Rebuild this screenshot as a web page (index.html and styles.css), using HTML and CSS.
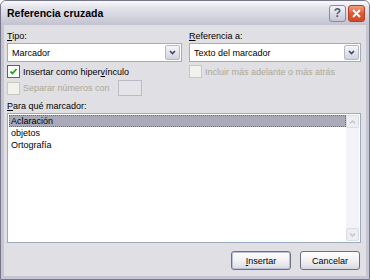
FILE: index.html
```html
<!DOCTYPE html>
<html lang="es">
<head>
    <meta charset="UTF-8">
    <title>Referencia cruzada</title>
    <link rel="stylesheet" href="styles.css">
</head>
<body>
    <div class="window">
        <div class="titlebar">
            <span class="title">Referencia cruzada</span>
            <div class="caption-buttons">
                <span class="cap-btn help">?</span>
                <span class="cap-btn close">
                    <svg width="9" height="9" viewBox="0 0 9 9"><path d="M1 1 L8 8 M8 1 L1 8" stroke="#fff" stroke-width="1.8" fill="none"/></svg>
                </span>
            </div>
        </div>

        <div class="client">
            <div class="columns">
                <div class="col">
                    <div class="lbl"><u>T</u>ipo:</div>
                    <div class="combo">
                        <span class="combo-text">Marcador</span>
                        <span class="combo-btn">
                            <svg width="7" height="5" viewBox="0 0 7 5"><path d="M1 1 L3.5 3.5 L6 1" stroke="#3c4a64" stroke-width="1.6" fill="none"/></svg>
                        </span>
                    </div>
                    <div class="check-row">
                        <span class="checkbox">
                            <svg width="9" height="9" viewBox="0 0 9 9"><path d="M1.5 4.5 L3.5 6.5 L7.5 2" stroke="#21a121" stroke-width="1.8" fill="none"/></svg>
                        </span>
                        <span>Insertar como hiper<u>v</u>ínculo</span>
                    </div>
                    <div class="check-row disabled sep-row">
                        <span class="checkbox"></span>
                        <span>Separar números con</span>
                        <span class="small-input"></span>
                    </div>
                </div>
                <div class="col">
                    <div class="lbl"><u>R</u>eferencia a:</div>
                    <div class="combo">
                        <span class="combo-text">Texto del marcador</span>
                        <span class="combo-btn">
                            <svg width="7" height="5" viewBox="0 0 7 5"><path d="M1 1 L3.5 3.5 L6 1" stroke="#3c4a64" stroke-width="1.6" fill="none"/></svg>
                        </span>
                    </div>
                    <div class="check-row disabled">
                        <span class="checkbox"></span>
                        <span>Incluir más adelante o más atrás</span>
                    </div>
                </div>
            </div>

            <div class="lbl list-lbl"><u>P</u>ara qué marcador:</div>
            <div class="listbox">
                <div class="items">
                    <div class="item selected">Aclaración</div>
                    <div class="item">objetos</div>
                    <div class="item">Ortografía</div>
                </div>
                <div class="scrollbar">
                    <span class="sb-btn">
                        <svg width="7" height="4" viewBox="0 0 7 4"><path d="M1 3.5 L3.5 1 L6 3.5" stroke="#c4c4cc" stroke-width="1.4" fill="none"/></svg>
                    </span>
                    <span class="sb-track"></span>
                    <span class="sb-btn">
                        <svg width="7" height="4" viewBox="0 0 7 4"><path d="M1 0.5 L3.5 3 L6 0.5" stroke="#c4c4cc" stroke-width="1.4" fill="none"/></svg>
                    </span>
                </div>
            </div>

            <div class="buttons">
                <button class="push default"><u>I</u>nsertar</button>
                <button class="push">Cancelar</button>
            </div>
        </div>
    </div>
</body>
</html>
```

FILE: styles.css
```css
body {
    margin: 0;
    font-family: "Liberation Sans", Arial, sans-serif;
    font-size: 9px;
    color: #000;
    background: #fff;
}

.window {
    width: 370px;
    height: 280px;
    box-sizing: border-box;
    display: flex;
    flex-direction: column;
    background: #c6c6d2;
    border: 1px solid #76768a;
    border-radius: 6px 6px 0 0;
}

.titlebar {
    height: 24px;
    display: flex;
    align-items: center;
    padding: 0 4px 0 6px;
    border-radius: 5px 5px 0 0;
    background: linear-gradient(#fbfbfd 0%, #e4e4ec 25%, #d6d6e0 60%, #c2c2d0 100%);
}

.title {
    flex: 1;
    font-weight: bold;
    font-size: 10.5px;
    color: #000;
}

.caption-buttons {
    display: flex;
    gap: 2px;
}

.cap-btn {
    width: 17px;
    height: 17px;
    box-sizing: border-box;
    border-radius: 3px;
    display: flex;
    align-items: center;
    justify-content: center;
}

.help {
    border: 1px solid #8a8aa0;
    background: linear-gradient(#f4f4f8, #c4c6d8);
    color: #5a5a70;
    font-weight: bold;
    font-size: 12px;
}

.close {
    border: 1px solid #b04020;
    background: linear-gradient(#f0a080, #e05a34 50%, #d04a24);
}

.client {
    flex: 1;
    margin: 0 3px 3px;
    padding: 5px 5px 0 3px;
    background: #e0dfe3;
    display: flex;
    flex-direction: column;
}

.columns {
    display: grid;
    grid-template-columns: 175px 1fr;
    column-gap: 7px;
}

.lbl {
    line-height: 12px;
    height: 12px;
    margin-bottom: 1px;
}

.combo {
    height: 19px;
    box-sizing: border-box;
    border: 1px solid #a5acb8;
    background: #fff;
    display: flex;
    align-items: center;
    padding: 1px;
}

.combo-text {
    flex: 1;
    padding-left: 3px;
}

.combo-btn {
    width: 15px;
    height: 15px;
    box-sizing: border-box;
    border: 1px solid #b4b8c8;
    border-radius: 2px;
    background: linear-gradient(#f6f6fa, #d0d2de);
    display: flex;
    align-items: center;
    justify-content: center;
}

.check-row {
    display: flex;
    align-items: center;
    gap: 3px;
    height: 13px;
    margin-top: 3px;
}

.checkbox {
    width: 13px;
    height: 13px;
    box-sizing: border-box;
    border: 1px solid #3d6a98;
    background: #fff;
    display: flex;
    align-items: center;
    justify-content: center;
}

.disabled {
    color: #aca899;
}

.disabled .checkbox {
    border-color: #cac8bc;
    background: #f2f1ee;
}

.sep-row {
    height: 16px;
    margin-top: 2px;
}

.small-input {
    width: 24px;
    height: 16px;
    box-sizing: border-box;
    margin-left: 5px;
    border: 1px solid #bcbcc8;
    background: #e4e4e8;
}

.list-lbl {
    margin-top: 4px;
}

.listbox {
    height: 130px;
    box-sizing: border-box;
    border: 1px solid #9aaac0;
    background: #fff;
    display: flex;
    padding: 1px;
}

.items {
    flex: 1;
}

.item {
    height: 12px;
    line-height: 12px;
    padding-left: 2px;
}

.item.selected {
    background: #a9a9b8;
    outline: 1px dotted #6a6a78;
    outline-offset: -1px;
}

.scrollbar {
    width: 13px;
    display: flex;
    flex-direction: column;
    background: #f4f4f8;
}

.sb-btn {
    height: 13px;
    box-sizing: border-box;
    border: 1px solid #dcdce4;
    border-radius: 2px;
    background: #eeeef2;
    display: flex;
    align-items: center;
    justify-content: center;
}

.sb-track {
    flex: 1;
}

.buttons {
    display: flex;
    justify-content: flex-end;
    gap: 9px;
    margin-top: 8px;
    margin-right: 1px;
}

.push {
    width: 60px;
    height: 19px;
    padding: 0;
    font-family: "Liberation Sans", Arial, sans-serif;
    font-size: 9px;
    color: #000;
    border: 1px solid #6f6f82;
    border-radius: 3px;
    background: linear-gradient(#ffffff, #f0f0f4 55%, #d8d8e0);
}

.push.default {
    box-shadow: inset 0 0 0 1px #b8c0dc;
}
```
